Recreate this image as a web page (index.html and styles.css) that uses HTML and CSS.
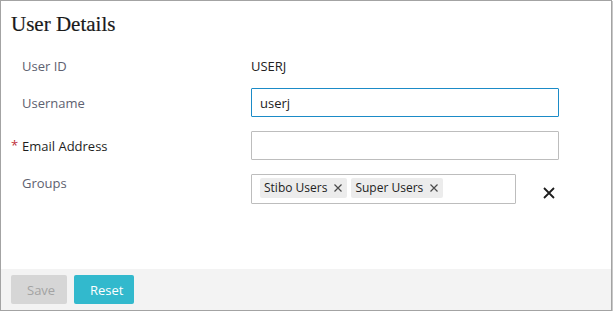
FILE: index.html
```html
<!DOCTYPE html>
<html lang="en">
<head>
    <meta charset="UTF-8">
    <title>User Details</title>
    <link rel="stylesheet" href="styles.css">
</head>
<body>
    <div class="panel">
        <div class="panel-body">
            <h1 class="panel-title">User Details</h1>

            <div class="form">
                <div class="form-row">
                    <label class="form-label">User ID</label>
                    <div class="form-value">USERJ</div>
                </div>

                <div class="form-row">
                    <label class="form-label">Username</label>
                    <input type="text" class="text-input focused" value="userj">
                </div>

                <div class="form-row">
                    <label class="form-label required">Email Address</label>
                    <input type="text" class="text-input" value="">
                </div>

                <div class="form-row groups-row">
                    <label class="form-label">Groups</label>
                    <div class="tag-box">
                        <span class="tag">Stibo Users
                            <svg class="tag-remove" width="8" height="8" viewBox="0 0 8 8">
                                <path d="M0.5 0.5 L7.5 7.5 M7.5 0.5 L0.5 7.5" stroke="#4a4a4a" stroke-width="1.2" fill="none"/>
                            </svg>
                        </span>
                        <span class="tag">Super Users
                            <svg class="tag-remove" width="8" height="8" viewBox="0 0 8 8">
                                <path d="M0.5 0.5 L7.5 7.5 M7.5 0.5 L0.5 7.5" stroke="#4a4a4a" stroke-width="1.2" fill="none"/>
                            </svg>
                        </span>
                    </div>
                    <button class="clear-groups" title="Clear">
                        <svg width="12" height="12" viewBox="0 0 12 12">
                            <path d="M1 1 L11 11 M11 1 L1 11" stroke="#1d1d1d" stroke-width="1.8" fill="none"/>
                        </svg>
                    </button>
                </div>
            </div>
        </div>

        <div class="panel-footer">
            <button class="btn btn-save" disabled>Save</button>
            <button class="btn btn-reset">Reset</button>
        </div>
    </div>
</body>
</html>
```

FILE: styles.css
```css
body {
    margin: 0;
    font-family: "Open Sans", Arial, sans-serif;
    background-color: #ffffff;
}

.panel {
    width: 610px;
    height: 309px;
    border: 1px solid #a3a3a3;
    box-shadow: 1px 1px 0 #c8c8c8;
    display: flex;
    flex-direction: column;
    background-color: #ffffff;
}

.panel-body {
    flex: 1;
    padding: 0 10px;
}

.panel-title {
    margin: 0;
    padding-top: 11px;
    font-family: "Liberation Serif", "DejaVu Serif", serif;
    font-weight: normal;
    font-size: 21px;
    line-height: 24px;
    color: #1a1a1a;
    -webkit-text-stroke: 0.2px #1a1a1a;
}

.form {
    margin-top: 21px;
}

.form-row {
    display: flex;
    align-items: center;
    margin-bottom: 14px;
}

.form-row:first-child {
    margin-bottom: 13px;
}

.form-label {
    width: 229px;
    padding-left: 11px;
    font-size: 13px;
    color: #5e6170;
    position: relative;
}

.form-label.required {
    color: #1e1e1e;
}

.form-label.required::before {
    content: "*";
    position: absolute;
    left: 0;
    top: -1px;
    color: #c0303a;
}

.form-value {
    font-size: 13px;
    color: #222;
}

.text-input {
    width: 308px;
    height: 29px;
    box-sizing: border-box;
    border: 1px solid #bdbdbd;
    border-radius: 1px;
    padding: 0 8px;
    font-family: "Open Sans", Arial, sans-serif;
    font-size: 13px;
    color: #222;
    outline: none;
}

.text-input.focused {
    border-color: #1b8bc7;
}

.groups-row {
    align-items: flex-start;
}

.tag-box {
    width: 265px;
    height: 30px;
    box-sizing: border-box;
    border: 1px solid #bdbdbd;
    border-radius: 1px;
    padding: 3px 8px;
    display: flex;
    gap: 4px;
}

.tag {
    background-color: #ececec;
    font-size: 12px;
    color: #222;
    height: 20px;
    line-height: 20px;
    padding: 0 5px 0 4px;
    border-radius: 2px;
    display: flex;
    align-items: center;
    gap: 7px;
}

.tag-remove {
    display: block;
}

.clear-groups {
    margin-left: 27px;
    margin-top: 13px;
    padding: 0;
    border: none;
    background: none;
    cursor: pointer;
    line-height: 0;
}

.panel-footer {
    height: 41px;
    background-color: #f3f3f3;
    display: flex;
    align-items: center;
    gap: 7px;
    padding: 0 10px;
}

.btn {
    height: 29px;
    border: none;
    border-radius: 2px;
    font-family: "Open Sans", Arial, sans-serif;
    font-size: 13px;
    padding: 0 16px;
    cursor: pointer;
}

.btn-save {
    width: 56px;
    background-color: #d6d6d6;
    color: #a3a3a3;
}

.btn-reset {
    width: 60px;
    background-color: #32b9cd;
    color: #ffffff;
}
```
